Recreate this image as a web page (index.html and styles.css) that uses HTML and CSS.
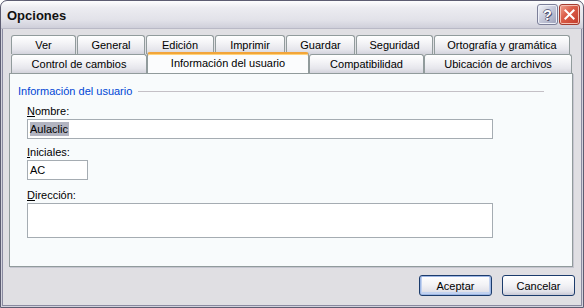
FILE: index.html
```html
<html>
  <head>
    <title>Opciones</title>
    <meta content="text/html;charset=utf-8" http-equiv="Content-Type">
    <link rel="stylesheet" href="styles.css">
  </head>
  <body>
    <div class="window">
      <div class="titlebar">
        <span class="title">Opciones</span>
        <div class="caption-btns">
          <span class="cap help">?</span>
          <span class="cap close">
            <svg width="21" height="21" viewBox="0 0 21 21"><path d="M6 6 L15 15 M15 6 L6 15" stroke="#fff" stroke-width="2.2" stroke-linecap="square" fill="none"/></svg>
          </span>
        </div>
      </div>

      <div class="content">
        <div class="tabs">
          <div class="tab-row back">
            <div class="tab">Ver</div>
            <div class="tab">General</div>
            <div class="tab">Edición</div>
            <div class="tab">Imprimir</div>
            <div class="tab">Guardar</div>
            <div class="tab">Seguridad</div>
            <div class="tab">Ortografía y gramática</div>
          </div>
          <div class="tab-row front">
            <div class="tab">Control de cambios</div>
            <div class="tab active">Información del usuario</div>
            <div class="tab">Compatibilidad</div>
            <div class="tab">Ubicación de archivos</div>
          </div>
        </div>

        <div class="panel">
          <div class="group-head"><span>Información del usuario</span><i></i></div>

          <div class="field first">
            <label><u>N</u>ombre:</label>
            <div class="textbox wide"><span class="sel">Aulaclic</span></div>
          </div>
          <div class="field">
            <label><u>I</u>niciales:</label>
            <div class="textbox short">AC</div>
          </div>
          <div class="field addr">
            <label><u>D</u>irección:</label>
            <div class="textbox wide tall"></div>
          </div>
        </div>

        <div class="actions">
          <button class="btn default">Aceptar</button>
          <button class="btn">Cancelar</button>
        </div>
      </div>
    </div>
  </body>
</html>
```

FILE: styles.css
```css
* {
  box-sizing: border-box;
}
body {
  margin: 0;
  font-family: "Liberation Sans", Arial, sans-serif;
  font-size: 11px;
  color: #000;
  background: #fff;
}
.window {
  width: 584px;
  height: 308px;
  display: flex;
  flex-direction: column;
  border: 1px solid #5d5d72;
  border-radius: 7px 7px 0 0;
  background: #e0dfe3;
  box-shadow: inset 1px 0 #d2d2dc, inset -1px 0 #d2d2dc, inset 0 -1px #d2d2dc,
    inset 2px 0 #8a8aa0, inset -2px 0 #8a8aa0, inset 0 -2px #8a8aa0;
  overflow: hidden;
}

/* title bar */
.titlebar {
  height: 28px;
  flex: none;
  display: flex;
  justify-content: space-between;
  align-items: flex-start;
  padding: 3px 3px 0 6px;
  border-radius: 6px 6px 0 0;
  background: linear-gradient(#fdfdfe 0, #ececf1 25%, #e2e2e9 70%, #cfcfda 100%);
  border-bottom: 1px solid #b9b9c6;
}
.title {
  font-weight: bold;
  font-size: 13px;
  line-height: 23px;
  color: #111;
}
.caption-btns {
  display: flex;
  gap: 1px;
}
.cap {
  width: 21px;
  height: 21px;
  border-radius: 3px;
  display: flex;
  align-items: center;
  justify-content: center;
}
.help {
  border: 1px solid #7c7f99;
  background: linear-gradient(135deg, #f4f5fa 0, #c9ccdc 45%, #9a9eb8 100%);
  box-shadow: inset 0 0 0 1px #eef0f8;
  color: #fff;
  font-weight: bold;
  font-size: 14px;
  text-shadow: 1px 1px 0 #4f5270, -1px 0 0 #6a6d88, 0 -1px 0 #6a6d88;
}
.close {
  border: 1px solid #a33b2f;
  background: linear-gradient(135deg, #f0a594 0, #dc5f4a 40%, #c2392a 100%);
  box-shadow: inset 0 0 0 1px #f4c0b4;
}

/* contents */
.content {
  flex: 1;
  display: flex;
  flex-direction: column;
  padding: 6px 8px 0 8px;
}
.tabs {
  margin-left: 2px;
}
.tab-row {
  display: grid;
  height: 19px;
}
.tab-row.back {
  grid-template-columns: 65px 68px 68px 70px 69px 77px 136px;
  column-gap: 1px;
}
.tab-row.front {
  grid-template-columns: 136px 162px 115px 148px;
}
.tab {
  border: 1px solid #919b9c;
  border-bottom: 0;
  border-radius: 3px 3px 0 0;
  background: linear-gradient(#ffffff 0, #f3f3f6 40%, #e6e6ec 75%, #d3d3dc 100%);
  text-align: center;
  line-height: 18px;
  white-space: nowrap;
}
.front .tab {
  height: 19px;
}
.tab.active {
  position: relative;
  z-index: 1;
  margin-top: -2px;
  height: 21px;
  line-height: 19px;
  background: #fbfcfd;
  border-top: 2px solid #f2a53a;
  box-shadow: inset 0 1px #ffd27a;
}

.panel {
  height: 194px;
  margin-right: 2px;
  border: 1px solid #919b9c;
  background: #f8fbfc;
  padding: 11px 28px 0 8px;
  box-shadow: 1px 1px 0 #c5c5cf;
}
.group-head {
  display: flex;
  align-items: center;
  height: 13px;
  line-height: 13px;
  color: #0046d5;
}
.group-head i {
  flex: 1;
  height: 1px;
  margin: 0 0 1px 6px;
  background: #c4c0c6;
}
.field {
  padding-left: 9px;
  margin-top: 7px;
}
.field.addr {
  margin-top: 9px;
}
.field label {
  display: block;
  line-height: 13px;
  margin-bottom: 1px;
}
.textbox {
  height: 20px;
  border: 1px solid #a5acb2;
  background: #fff;
  padding-left: 2px;
  line-height: 18px;
}
.textbox.wide {
  width: 466px;
}
.textbox.short {
  width: 61px;
}
.textbox.tall {
  height: 35px;
}
.sel {
  background: #b2b4c0;
  padding: 1px 1px 1px 0;
}

.actions {
  display: flex;
  justify-content: flex-end;
  gap: 10px;
  margin-top: 8px;
}
.btn {
  width: 73px;
  height: 21px;
  padding: 0;
  font-family: inherit;
  font-size: 11px;
  color: #000;
  border: 1px solid #1c3c6c;
  border-radius: 3px;
  background: linear-gradient(#ffffff 0, #f3f3f6 45%, #e3e3ea 80%, #c9c9d6 100%);
}
.btn.default {
  box-shadow: inset 0 0 0 1px #9db6e4, inset 0 -1px 0 2px #c2d2f0;
}
```
